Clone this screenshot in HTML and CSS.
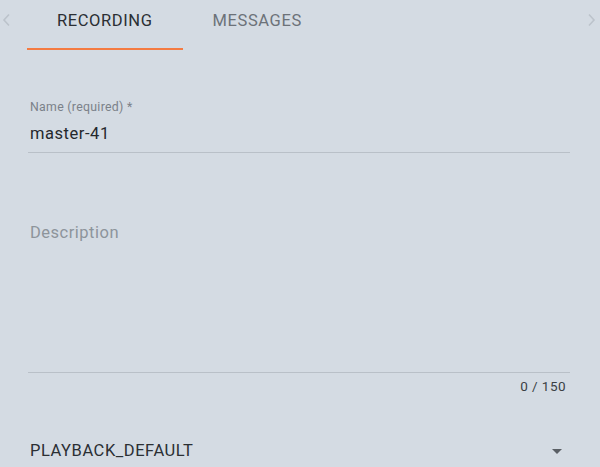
FILE: index.html
```html
<!DOCTYPE html>
<html>
<head>
<meta charset="utf-8">
<link rel="stylesheet" href="styles.css">
</head>
<body>
<div class="page">
  <div class="tabbar">
    <div class="chev chev-left">
      <svg width="10" height="14" viewBox="0 0 10 14"><path d="M8 1.5 L3 7 L8 12.5" fill="none" stroke="#bcc3cb" stroke-width="1.6"/></svg>
    </div>
    <div class="tabs">
      <div class="tab active">RECORDING</div>
      <div class="tab">MESSAGES</div>
    </div>
    <div class="chev chev-right">
      <svg width="10" height="14" viewBox="0 0 10 14"><path d="M2 1.5 L7 7 L2 12.5" fill="none" stroke="#bcc3cb" stroke-width="1.6"/></svg>
    </div>
  </div>
  <div class="form">
    <div class="field name-field">
      <div class="label">Name (required) *</div>
      <div class="value">master-41</div>
    </div>
    <div class="field desc-field">
      <div class="placeholder">Description</div>
    </div>
    <div class="counter">0 / 150</div>
    <div class="select">
      <div class="select-value">PLAYBACK_DEFAULT</div>
      <div class="arrow"></div>
    </div>
  </div>
</div>
</body>
</html>
```

FILE: styles.css
```css
html, body {
  margin: 0;
  padding: 0;
  background: #d4dbe3;
  font-family: Roboto, "Liberation Sans", sans-serif;
}
.page {
  width: 600px;
  height: 467px;
  overflow: hidden;
}
.tabbar {
  display: flex;
  height: 50px;
}
.chev {
  width: 27px;
  display: flex;
  padding-top: 13px;
  box-sizing: border-box;
}
.chev-left { justify-content: flex-start; padding-left: 1px; }
.chev-right { margin-left: auto; width: 13px; justify-content: flex-start; }
.tabs {
  display: flex;
}
.tab {
  padding: 11px 30px 0;
  box-sizing: border-box;
  height: 50px;
  font-size: 16.5px;
  color: #6c7279;
  letter-spacing: 0.6px;
}
.tab.active {
  color: #2b2f34;
  border-bottom: 2px solid #f47b42;
}
.form {
  padding: 0 30px 0 28px;
}
.field {
  border-bottom: 1px solid #b9c0c8;
}
.name-field {
  margin-top: 50px;
  padding-left: 2px;
  height: 53px;
  box-sizing: border-box;
}
.label {
  font-size: 12.3px;
  color: #7b8189;
  line-height: 14px;
  letter-spacing: 0.3px;
}
.value {
  font-size: 16.5px;
  color: #24282c;
  margin-top: 10px;
  line-height: 20px;
  letter-spacing: 0.55px;
}
.desc-field {
  margin-top: 70px;
  padding-left: 2px;
  height: 150px;
  box-sizing: border-box;
}
.placeholder {
  font-size: 16.5px;
  color: #8d949b;
  line-height: 20px;
  letter-spacing: 0.5px;
}
.counter {
  text-align: right;
  font-size: 13.5px;
  color: #3a3f44;
  padding-right: 4px;
  margin-top: 6px;
  line-height: 15px;
  letter-spacing: 0.45px;
}
.select {
  display: flex;
  align-items: center;
  margin-top: 47px;
  padding-left: 2px;
}
.select-value {
  font-size: 16.5px;
  color: #2b2f34;
  line-height: 20px;
  letter-spacing: 0.55px;
}
.arrow {
  margin-left: auto;
  margin-right: 8px;
  width: 0;
  height: 0;
  border-left: 5px solid transparent;
  border-right: 5px solid transparent;
  border-top: 5px solid #5a5f65;
}
```
